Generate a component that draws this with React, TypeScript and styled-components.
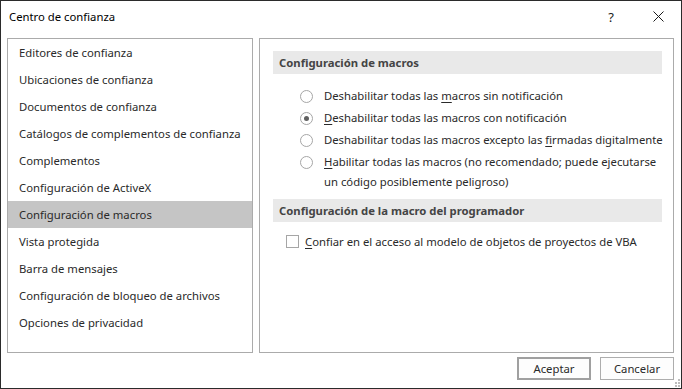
import styled, { createGlobalStyle } from "styled-components"

const GlobalStyle = createGlobalStyle`
  html, body {
    margin: 0;
    padding: 0;
    background: #fff;
  }
  * {
    box-sizing: border-box;
  }
`

const menuItems = [
  "Editores de confianza",
  "Ubicaciones de confianza",
  "Documentos de confianza",
  "Catálogos de complementos de confianza",
  "Complementos",
  "Configuración de ActiveX",
  "Configuración de macros",
  "Vista protegida",
  "Barra de mensajes",
  "Configuración de bloqueo de archivos",
  "Opciones de privacidad",
]

export default function App() {
  return <>
    <GlobalStyle />
    <DialogWindow>
      <TitleBar>
        <TitleText>Centro de confianza</TitleText>
        <TitleButtons>
          <HelpButton>?</HelpButton>
          <CloseButton>
            <svg width="11" height="11" viewBox="0 0 11 11">
              <path d="M0.5 0.5 L10.5 10.5 M10.5 0.5 L0.5 10.5" stroke="#1a1a1a" strokeWidth="1" fill="none" />
            </svg>
          </CloseButton>
        </TitleButtons>
      </TitleBar>

      <DialogBody>
        <NavPanel>
          {menuItems.map(item => (
            <NavItem key={item} $active={item === "Configuración de macros"}>{item}</NavItem>
          ))}
        </NavPanel>

        <ContentPanel>
          <SectionHeader>Configuración de macros</SectionHeader>
          <OptionList>
            <OptionRow>
              <Radio />
              <OptionText>Deshabilitar todas las <u>m</u>acros sin notificación</OptionText>
            </OptionRow>
            <OptionRow>
              <Radio $checked />
              <OptionText><u>D</u>eshabilitar todas las macros con notificación</OptionText>
            </OptionRow>
            <OptionRow>
              <Radio />
              <OptionText>Deshabilitar todas las macros excepto las <u>f</u>irmadas digitalmente</OptionText>
            </OptionRow>
            <OptionRow>
              <Radio />
              <OptionText>
                <u>H</u>abilitar todas las macros (no recomendado; puede ejecutarse<br />
                un código posiblemente peligroso)
              </OptionText>
            </OptionRow>
          </OptionList>

          <SectionHeader $top={6}>Configuración de la macro del programador</SectionHeader>
          <CheckRow>
            <Checkbox />
            <OptionText><u>C</u>onfiar en el acceso al modelo de objetos de proyectos de VBA</OptionText>
          </CheckRow>
        </ContentPanel>
      </DialogBody>

      <DialogFooter>
        <DialogButton $default>Aceptar</DialogButton>
        <DialogButton>Cancelar</DialogButton>
      </DialogFooter>

      <ResizeGrip>
        <svg width="6" height="8" viewBox="0 0 6 8">
          <rect x="4" y="0" width="2" height="2" fill="#bdbdbd" />
          <rect x="4" y="3" width="2" height="2" fill="#bdbdbd" />
          <rect x="1" y="3" width="2" height="2" fill="#bdbdbd" />
          <rect x="4" y="6" width="2" height="2" fill="#bdbdbd" />
          <rect x="1" y="6" width="2" height="2" fill="#bdbdbd" />
        </svg>
      </ResizeGrip>
    </DialogWindow>
  </>
}

const DialogWindow = styled.div`
  position: relative;
  width: 682px;
  height: 389px;
  border: 1px solid #2b2b2b;
  background: #fff;
  display: flex;
  flex-direction: column;
  font-family: "Segoe UI", "Noto Sans", sans-serif;
  font-size: 11.3px;
  color: #2a2a2a;
`

const TitleBar = styled.div`
  height: 31px;
  display: flex;
  align-items: center;
  justify-content: space-between;
  padding-left: 8px;
`

const TitleText = styled.div`
  color: #000;
  font-size: 11.3px;
`

const TitleButtons = styled.div`
  display: flex;
  align-items: center;
  height: 100%;
`

const HelpButton = styled.div`
  width: 46px;
  text-align: center;
  font-size: 13px;
  color: #1a1a1a;
  margin-right: 1px;
`

const CloseButton = styled.div`
  width: 46px;
  height: 100%;
  display: flex;
  align-items: center;
  justify-content: center;
  padding-bottom: 1px;
`

const DialogBody = styled.div`
  display: flex;
  gap: 6px;
  padding: 0 6px;
  margin-top: 6px;
  height: 315px;
`

const NavPanel = styled.div`
  width: 246px;
  border: 1px solid #ababab;
  display: flex;
  flex-direction: column;
`

const NavItem = styled.div<{ $active?: boolean }>`
  height: 27px;
  line-height: 27px;
  padding-left: 11px;
  white-space: nowrap;
  background: ${p => p.$active ? "#c5c5c5" : "transparent"};
`

const ContentPanel = styled.div`
  width: 415px;
  border: 1px solid #ababab;
  display: flex;
  flex-direction: column;
`

const SectionHeader = styled.div<{ $top?: number }>`
  margin: ${p => p.$top ?? 12}px 11px 0 13px;
  height: 23px;
  line-height: 23px;
  padding-left: 6px;
  background: #e9e9e9;
  font-weight: bold;
  color: #444;
`

const OptionList = styled.div`
  margin-top: 11px;
  padding-left: 40px;
  display: flex;
  flex-direction: column;
`

const OptionRow = styled.div`
  display: flex;
  align-items: flex-start;
  padding: 1px 0;
  line-height: 20px;
`

const OptionText = styled.span`
  white-space: nowrap;

  u {
    text-underline-offset: 2px;
  }
`

const Radio = styled.span<{ $checked?: boolean }>`
  flex: none;
  width: 13px;
  height: 13px;
  margin: 4px 11px 0 0;
  border: 1px solid #a6a6a6;
  border-radius: 50%;
  background: #fff;
  display: flex;
  align-items: center;
  justify-content: center;

  &::after {
    content: "";
    display: ${p => p.$checked ? "block" : "none"};
    width: 5px;
    height: 5px;
    border-radius: 50%;
    background: #606060;
  }
`

const CheckRow = styled.div`
  display: flex;
  align-items: center;
  margin-top: 8px;
  padding-left: 26px;
  height: 22px;
`

const Checkbox = styled.span`
  flex: none;
  width: 13px;
  height: 13px;
  border: 1px solid #a6a6a6;
  background: #fff;
  margin-right: 6px;
`

const DialogFooter = styled.div`
  display: flex;
  justify-content: flex-end;
  gap: 9px;
  padding: 4px 7px 0 0;
`

const DialogButton = styled.button<{ $default?: boolean }>`
  width: 74px;
  height: 23px;
  padding: 0;
  font-family: inherit;
  font-size: 11.3px;
  color: #2a2a2a;
  background: #fdfdfd;
  border: ${p => p.$default ? "2px solid #a0a0a0" : "1px solid #adadad"};
`

const ResizeGrip = styled.div`
  position: absolute;
  right: 1px;
  bottom: 1px;
  line-height: 0;
`
